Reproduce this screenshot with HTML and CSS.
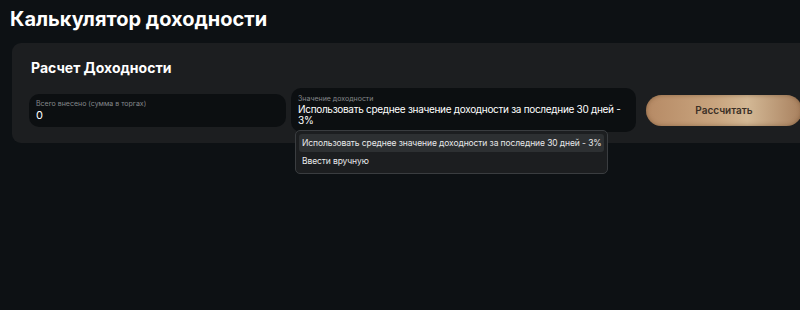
FILE: index.html
```html
<!DOCTYPE html>
<html lang="ru">
	<head>
		<meta charset="UTF-8" />
		<meta name="viewport" content="width=device-width, initial-scale=1.0" />
		<title>Калькулятор доходности</title>
		<link rel="stylesheet" href="styles.css">
	</head>
	<body>
		<main class="page">
			<h1 class="page-title">Калькулятор доходности</h1>
			<section class="calc-card">
				<h2 class="calc-card-title">Расчет Доходности</h2>
				<div class="calc-row">
					<div class="calc-field calc-field-amount">
						<span class="calc-field-label">Всего внесено (сумма в торгах)</span>
						<span class="calc-field-value">0</span>
					</div>
					<div class="calc-field calc-field-select">
						<span class="calc-field-label">Значение доходности</span>
						<span class="calc-field-value">Использовать среднее значение доходности за последние 30 дней - 3%</span>
						<ul class="calc-dropdown">
							<li class="calc-dropdown-item is-active">Использовать среднее значение доходности за последние 30 дней - 3%</li>
							<li class="calc-dropdown-item">Ввести вручную</li>
						</ul>
					</div>
					<button class="calc-button" type="button">Рассчитать</button>
				</div>
			</section>
		</main>
	</body>
</html>
```

FILE: styles.css
```css
html,
body {
	margin: 0;
	height: 100%;
	background-color: #0d1114;
}
body {
	font-family: Inter, "Noto Sans", sans-serif;
	color: #ffffff;
}
.page {
	width: 800px;
	height: 310px;
	overflow: hidden;
	padding: 6px 0 0 12px;
	box-sizing: border-box;
}
.page-title {
	margin: 0 0 0 -2px;
	font-size: 20px;
	line-height: 26px;
	font-weight: 700;
}
.calc-card {
	margin-top: 11px;
	width: 800px;
	background-color: #1c1e20;
	border-radius: 9px;
	padding: 16px 0 11px 17px;
}
.calc-card-title {
	margin: 0 0 0 2px;
	font-size: 14px;
	line-height: 18px;
	font-weight: 700;
}
.calc-row {
	display: flex;
	align-items: center;
	margin-top: 11px;
}
.calc-field {
	position: relative;
	display: flex;
	flex-direction: column;
	justify-content: center;
	background-color: #0c0f11;
	border-radius: 10px;
	padding: 0 7px;
	box-sizing: border-box;
}
.calc-field-amount {
	width: 257px;
	height: 33px;
}
.calc-field-select {
	width: 345px;
	height: 44px;
	margin-left: 5px;
}
.calc-field-label {
	font-size: 7px;
	line-height: 10px;
	color: #85888b;
}
.calc-field-value {
	font-size: 10px;
	line-height: 11px;
	letter-spacing: -0.3px;
	color: #ffffff;
}
.calc-field-amount .calc-field-value {
	font-size: 11px;
	line-height: 12px;
}
.calc-dropdown {
	position: absolute;
	top: 42px;
	left: 4px;
	width: 313px;
	margin: 0;
	padding: 3px;
	list-style: none;
	box-sizing: border-box;
	background-color: #1c1e20;
	border: 1px solid #3a3d40;
	border-radius: 5px;
	z-index: 2;
}
.calc-dropdown-item {
	font-size: 8.5px;
	line-height: 18px;
	letter-spacing: -0.1px;
	padding: 0 3px;
	border-radius: 3px;
	color: #e8e9ea;
	white-space: nowrap;
}
.calc-dropdown-item.is-active {
	background-color: #2d3032;
}
.calc-button {
	margin-left: 10px;
	width: 156px;
	height: 31px;
	border: none;
	border-radius: 16px;
	background: linear-gradient(90deg, #b68a65 0%, #c9a57f 45%, #d3b895 65%, #a8805e 100%);
	color: #3b3026;
	font-family: Inter, "Noto Sans", sans-serif;
	font-size: 10px;
	font-weight: 600;
	box-shadow: inset 0 0 4px rgba(90, 60, 30, 0.5);
}
```
